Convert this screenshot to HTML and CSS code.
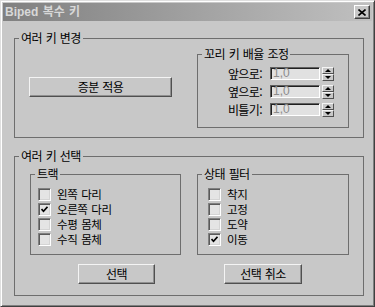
FILE: index.html
```html
<!DOCTYPE html>
<html lang="ko">
<head>
<meta charset="utf-8">
<title>Biped 복수 키</title>
<link rel="stylesheet" href="styles.css">
</head>
<body>
<div class="window">
  <div class="titlebar">
    <span class="title">Biped 복수 키</span>
    <span class="close"><svg width="8" height="7" viewBox="0 0 8 7"><path d="M0.5 0.5 L7.5 6.5 M7.5 0.5 L0.5 6.5" stroke="#000" stroke-width="1.6" fill="none"/></svg></span>
  </div>
  <div class="content">
    <div class="group g1">
      <div class="gtitle">여러 키 변경</div>
      <div class="g1-body">
        <div class="btn btn-apply">증분 적용</div>
        <div class="group g-scale">
          <div class="gtitle">꼬리 키 배율 조정</div>
          <div class="rows">
            <div class="row"><span class="lbl">앞으로:</span><span class="field">1,0</span><span class="spin"><span class="sb up"></span><span class="sb down"></span></span></div>
            <div class="row"><span class="lbl">옆으로:</span><span class="field">1,0</span><span class="spin"><span class="sb up"></span><span class="sb down"></span></span></div>
            <div class="row"><span class="lbl">비틀기:</span><span class="field">1,0</span><span class="spin"><span class="sb up"></span><span class="sb down"></span></span></div>
          </div>
        </div>
      </div>
    </div>
    <div class="group g2">
      <div class="gtitle">여러 키 선택</div>
      <div class="g2-body">
        <div class="group sub sub-track">
          <div class="gtitle">트랙</div>
          <div class="checks">
            <div class="chk"><span class="box"></span><span class="ctext">왼쪽 다리</span></div>
            <div class="chk"><span class="box on"><svg width="7" height="7" viewBox="0 0 7 7"><path d="M0.5 3 L2.5 5.2 L6.5 0.8" stroke="#000" stroke-width="1.7" fill="none"/></svg></span><span class="ctext">오른쪽 다리</span></div>
            <div class="chk"><span class="box"></span><span class="ctext">수평 몸체</span></div>
            <div class="chk"><span class="box"></span><span class="ctext">수직 몸체</span></div>
          </div>
        </div>
        <div class="group sub sub-state">
          <div class="gtitle">상태 필터</div>
          <div class="checks">
            <div class="chk"><span class="box"></span><span class="ctext">착지</span></div>
            <div class="chk"><span class="box"></span><span class="ctext">고정</span></div>
            <div class="chk"><span class="box"></span><span class="ctext">도약</span></div>
            <div class="chk"><span class="box on"><svg width="7" height="7" viewBox="0 0 7 7"><path d="M0.5 3 L2.5 5.2 L6.5 0.8" stroke="#000" stroke-width="1.7" fill="none"/></svg></span><span class="ctext">이동</span></div>
          </div>
        </div>
      </div>
      <div class="btn-row">
        <div class="btn btn-sel">선택</div>
        <div class="btn btn-desel">선택 취소</div>
      </div>
    </div>
  </div>
</div>
</body>
</html>
```
FILE: styles.css
```css
* { box-sizing: border-box; }
html, body { margin: 0; padding: 0; }
body {
  background: #c8c8c8;
  font-family: "Noto Sans CJK KR", sans-serif;
  font-size: 12px;
  letter-spacing: -0.6px;
  word-spacing: 1px;
  color: #000;
}
.window {
  width: 375px;
  height: 307px;
  border: 1px solid;
  border-color: #dfdfdf #404040 #404040 #dfdfdf;
  box-shadow: inset 1px 1px 0 #ffffff, inset -1px -1px 0 #808080;
  padding: 2px;
  background: #c8c8c8;
}
.titlebar {
  height: 18px;
  display: flex;
  align-items: center;
  justify-content: space-between;
  padding: 0 2px 0 2px;
  background: linear-gradient(to right, #808080, #c0c0c0);
}
.title {
  font-family: "Liberation Sans", "Noto Sans CJK KR", sans-serif;
  font-weight: bold;
  font-size: 12px;
  letter-spacing: 0;
  line-height: 12px;
  color: #d8d8d8;
}
.close {
  width: 16px;
  height: 14px;
  display: flex;
  align-items: center;
  justify-content: center;
  background: #c8c8c8;
  border: 1px solid;
  border-color: #ffffff #404040 #404040 #ffffff;
  box-shadow: inset -1px -1px 0 #808080;
}
.content {
  padding: 17px 8px 0 11px;
}
.group {
  border: 1px solid #6e6e6e;
}
.gtitle {
  width: max-content;
  height: 12px;
  line-height: 12px;
  margin: -7px 0 0 4px;
  padding: 0 2px;
  background: #c8c8c8;
  white-space: pre;
}
.g1 { height: 100px; }
.g1-body {
  display: flex;
  align-items: flex-start;
}
.btn {
  height: 20px;
  display: flex;
  align-items: center;
  justify-content: center;
  background: #c8c8c8;
  border: 1px solid;
  border-color: #f4f4f4 #505050 #505050 #f4f4f4;
  box-shadow: inset -1px -1px 0 #909090;
  line-height: 12px;
}
.btn-apply {
  width: 143px;
  margin: 33px 0 0 14px;
}
.g-scale {
  width: 152px;
  height: 74px;
  margin: 10px 14px 0 auto;
}
.rows {
  padding-top: 7px;
  display: flex;
  flex-direction: column;
  gap: 4px;
}
.row {
  height: 14px;
  display: flex;
  align-items: flex-start;
  justify-content: flex-end;
  padding-right: 14px;
}
.lbl {
  height: 13px;
  line-height: 13px;
  margin-right: 8px;
}
.field {
  width: 50px;
  height: 13px;
  border: 1px solid;
  border-color: #606060 #ffffff #ffffff #606060;
  box-shadow: inset 1px 1px 0 #202020;
  background: #e1e1e1;
  color: #8c8c8c;
  font-family: "Liberation Sans", sans-serif;
  font-size: 12px;
  letter-spacing: 0;
  line-height: 11px;
  padding-left: 2px;
}
.spin {
  width: 12px;
  height: 14px;
  margin-left: 2px;
  display: flex;
  flex-direction: column;
}
.sb {
  height: 7px;
  display: flex;
  align-items: center;
  justify-content: center;
  background: #c8c8c8;
  border: 1px solid;
  border-color: #f4f4f4 #505050 #505050 #f4f4f4;
}
.sb.up::after {
  content: "";
  border-left: 3px solid transparent;
  border-right: 3px solid transparent;
  border-bottom: 3px solid #000;
}
.sb.down::after {
  content: "";
  border-left: 3px solid transparent;
  border-right: 3px solid transparent;
  border-top: 3px solid #000;
}
.g2 {
  height: 140px;
  margin-top: 18px;
}
.g2-body {
  display: flex;
  gap: 16px;
  padding: 12px 0 0 15px;
}
.sub { height: 81px; }
.sub-track { width: 151px; }
.sub-state { width: 152px; }
.checks {
  padding-top: 8px;
  display: flex;
  flex-direction: column;
  gap: 2px;
}
.sub-track .checks { padding-left: 7px; }
.sub-state .checks { padding-left: 10px; }
.chk {
  height: 13px;
  display: flex;
  align-items: center;
  gap: 6px;
}
.ctext {
  font-size: 11.5px;
  letter-spacing: -0.4px;
  line-height: 13px;
}
.box {
  width: 13px;
  height: 13px;
  flex: none;
  display: flex;
  align-items: center;
  justify-content: center;
  border: 1px solid;
  border-color: #808080 #ffffff #ffffff #808080;
  box-shadow: inset 1px 1px 0 #5a5a5a, inset -1px -1px 0 #d4d4d4;
  background: #e4e4e4;
}
.btn-row {
  display: flex;
  margin-top: 9px;
}
.btn-sel {
  width: 77px;
  margin-left: 63px;
}
.btn-desel {
  width: 78px;
  margin-left: 69px;
}
```
